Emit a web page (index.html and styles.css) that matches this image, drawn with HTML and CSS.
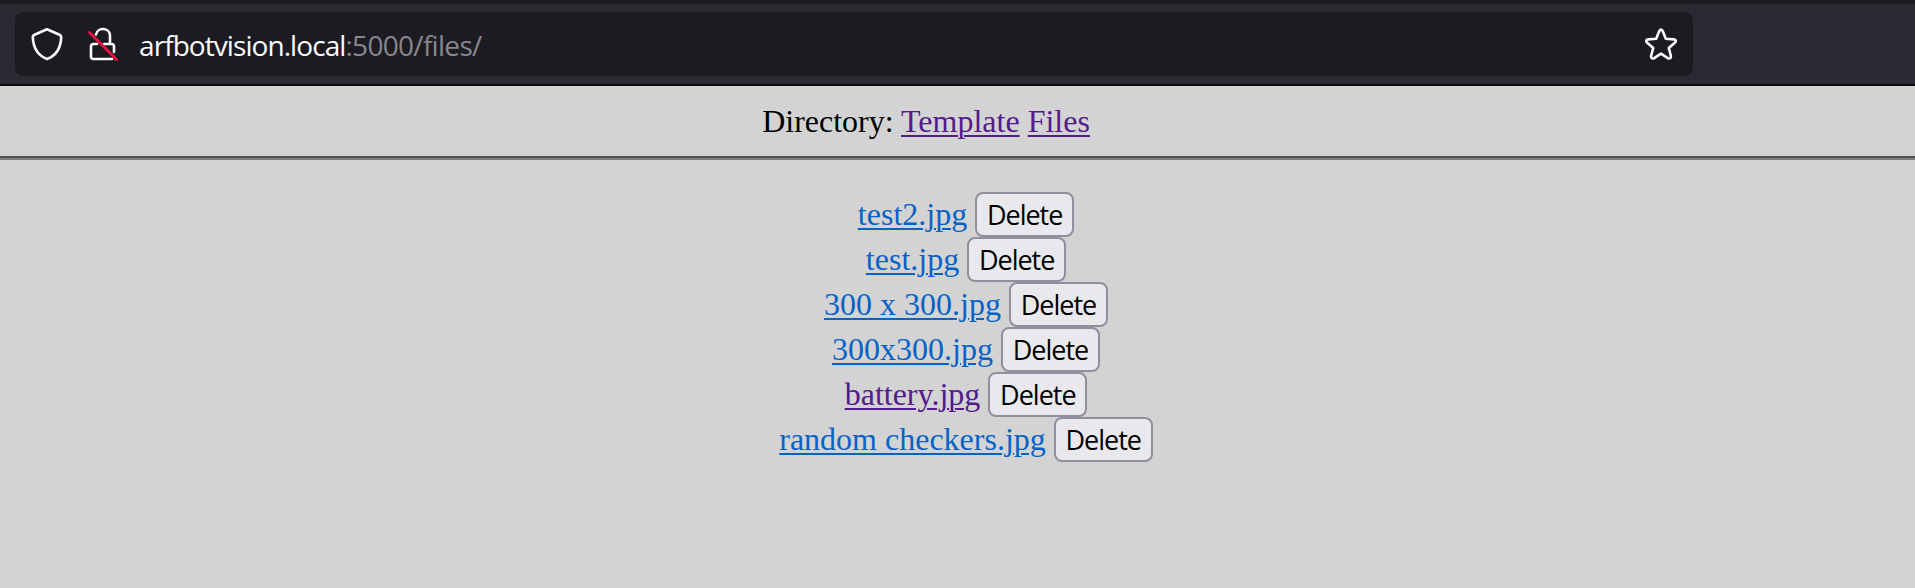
FILE: index.html
```
<!DOCTYPE html>
<html lang="en">
<head>
<meta charset="utf-8">
<title>Files</title>
<link rel="stylesheet" href="styles.css">
</head>
<body>
<header class="toolbar">
  <div class="urlbar">
    <svg class="icon shield" width="32" height="34" viewBox="0 0 32 34"><path d="M16 2.2 L29 8 Q30.3 8.7 30.2 10.3 C29.8 20 26.5 28 16 32 C5.5 28 2.2 20 1.8 10.3 Q1.7 8.7 3 8 Z"/></svg>
    <svg class="icon lock" width="30" height="34" viewBox="0 0 30 34"><path d="M8 7.500 C9.500 0 22 0 22 9 V17 M9 17 H5.5 Q3 17 3 19.5 V29.5 Q3 32 5.5 32 H24 M16 17 H23.500 Q26 17 26 19.500 V25"/><path class="slash" d="M1.500 5.500 L28.500 32.500"/></svg>
    <div class="url"><span class="host">arfbotvision.local</span><span class="path">:5000/files/</span></div>
    <svg class="icon star" width="32" height="32" viewBox="0 0 32 32"><path d="M14.300 3.100 Q16 0 17.700 3.100 L20.800 10.700 L28.900 11.400 Q32 12 30 14.500 L23.800 20 L25.900 28 Q26 31.500 22.800 30.200 L16 25.700 L9.200 30.200 Q6 31.500 6.100 28 L8.200 20 L2 14.500 Q0 12 3.100 11.400 L11.200 10.700 Z"/></svg>
  </div>
</header>
<nav class="directory">Directory: <a class="visited" href="#">Template</a> <a class="visited" href="#">Files</a></nav>
<main class="files">
  <div class="row"><a href="#">test2.jpg</a><button>Delete</button></div>
  <div class="row"><a href="#">test.jpg</a><button>Delete</button></div>
  <div class="row"><a href="#">300 x 300.jpg</a><button>Delete</button></div>
  <div class="row"><a href="#">300x300.jpg</a><button>Delete</button></div>
  <div class="row"><a class="visited" href="#">battery.jpg</a><button>Delete</button></div>
  <div class="row"><a href="#">random checkers.jpg</a><button>Delete</button></div>
</main>
</body>
</html>
```
FILE: styles.css
```
* { box-sizing: border-box; }
body {
  margin: 0;
  height: 588px;
  overflow: hidden;
  background: #d3d3d3;
  color: #000;
  font: 32px/37px "Liberation Serif", "Times New Roman", serif;
}
.toolbar {
  height: 86px;
  padding: 8px 0 0 15px;
  background: #2b2a33;
  border-top: 4px solid #1c1b22;
  border-bottom: 2px solid #0c0c0d;
}
.urlbar {
  display: flex;
  align-items: center;
  width: 1678px;
  height: 64px;
  padding: 0 16px;
  border-radius: 8px;
  background: #1c1b22;
}
.icon {
  flex: none;
  fill: none;
  stroke: #fbfbfe;
  stroke-width: 2.6;
  stroke-linecap: round;
  stroke-linejoin: round;
}
.lock { margin-left: 25px; }
.slash { stroke: #e2143f; stroke-width: 3; }
.url {
  flex: 1;
  margin: 2px 0 0 21px;
  font: 28px/36px "Open Sans", "Noto Sans", sans-serif;
  letter-spacing: -0.7px;
  white-space: nowrap;
}
.host { color: #fbfbfe; letter-spacing: -0.93px; }
.path { color: #87868c; }
.directory {
  height: 74px;
  padding: 17px 63px 0 0;
  border-bottom: 2px solid #808080;
  box-shadow: inset 0 -2px #505050;
  text-align: center;
}
a { color: #0563c8; text-decoration: underline 2px; text-underline-offset: 3px; }
a.visited { color: #551a8b; }
.files { padding: 32px 0 0 17px; }
.row {
  display: flex;
  justify-content: center;
  align-items: center;
  gap: 8px;
  height: 45px;
}
button {
  width: 99px;
  height: 45px;
  padding: 0;
  border: 2px solid #8f8f9d;
  border-radius: 8px;
  background: #e9e9ed;
  color: #000;
  font: 27px/36px "Open Sans", "Noto Sans", sans-serif;
  letter-spacing: -1px;
}
```
